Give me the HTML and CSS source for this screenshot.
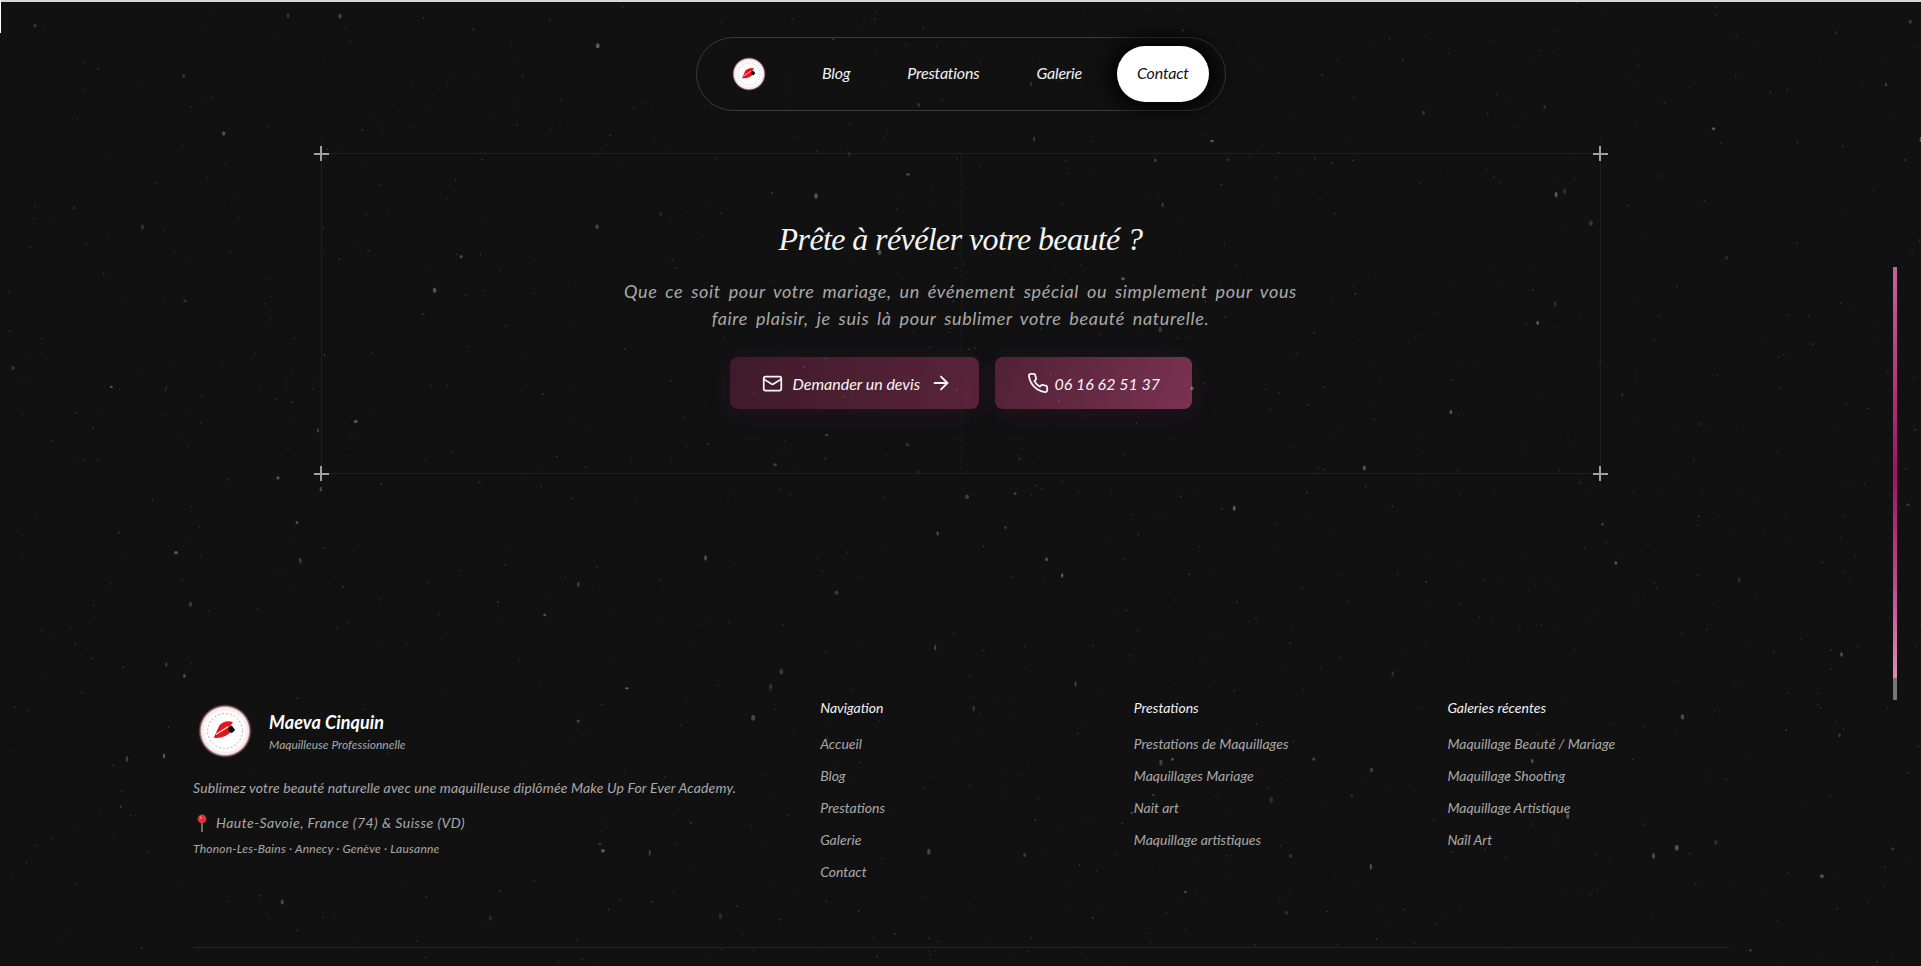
FILE: index.html
```html
<!DOCTYPE html>
<html lang="fr">
  <head>
    <meta charset="utf-8">
    <title>Maeva Cinquin - Maquilleuse Professionnelle</title>
    <link rel="stylesheet" href="styles.css">
  </head>
  <body>
    <svg class="defs" width="0" height="0" aria-hidden="true">
      <defs>
        <radialGradient id="logoGlow">
          <stop offset="0.72" stop-color="#fff"/>
          <stop offset="0.88" stop-color="#f6dfe4"/>
          <stop offset="1" stop-color="#7a3040" stop-opacity="0"/>
        </radialGradient>
        <symbol id="logo" viewBox="0 0 48 48">
          <circle cx="24" cy="24" r="24" fill="url(#logoGlow)"/>
          <circle cx="24" cy="24" r="15.5" fill="none" stroke="#999" stroke-width="0.8" stroke-dasharray="1.5 2"/>
          <path d="M14 30 L19 19 Q24 14 31 16 L28 21 L30 24 Q24 31 14 30 Z" fill="#e3141f"/>
          <path d="M16 27 L27 20" stroke="#fff" stroke-width="1"/>
          <path d="M27 21 L30 19 L33 23 L30 26 L27 24 Z" fill="#111"/>
        </symbol>
      </defs>
    </svg>

    <svg class="dust" id="dust" width="1921" height="966" aria-hidden="true"></svg>

    <div class="top-edge"></div>
    <div class="side-edge"></div>
    <div class="scroll-progress"><div class="scroll-thumb"></div></div>

    <nav class="navbar">
      <a class="nav-logo" href="#"><svg width="34" height="34"><use href="#logo"/></svg></a>
      <a class="nav-link" href="#">Blog</a>
      <a class="nav-link" href="#">Prestations</a>
      <a class="nav-link" href="#">Galerie</a>
      <a class="nav-link nav-active" href="#">Contact</a>
    </nav>

    <section class="cta">
      <span class="plus plus-tl"></span>
      <span class="plus plus-tr"></span>
      <span class="plus plus-bl"></span>
      <span class="plus plus-br"></span>
      <div class="cta-center"></div>

      <h2 class="cta-title">Prête à révéler votre beauté ?</h2>
      <p class="cta-text">Que ce soit pour votre mariage, un événement spécial ou simplement pour vous faire plaisir, je suis là pour sublimer votre beauté naturelle.</p>
      <div class="cta-buttons">
        <a class="btn btn-devis" href="#">
          <svg width="21" height="21" viewBox="0 0 24 24" fill="none" stroke="currentColor" stroke-width="2" stroke-linecap="round" stroke-linejoin="round"><rect x="2" y="4" width="20" height="16" rx="2"/><path d="m22 7-8.97 5.7a1.94 1.94 0 0 1-2.06 0L2 7"/></svg>
          <span>Demander un devis</span>
          <svg width="22" height="22" viewBox="0 0 24 24" fill="none" stroke="currentColor" stroke-width="2" stroke-linecap="round" stroke-linejoin="round"><path d="M5 12h14"/><path d="m12 5 7 7-7 7"/></svg>
        </a>
        <a class="btn btn-phone" href="#">
          <svg width="22" height="22" viewBox="0 0 24 24" fill="none" stroke="currentColor" stroke-width="2" stroke-linecap="round" stroke-linejoin="round"><path d="M22 16.92v3a2 2 0 0 1-2.18 2 19.79 19.79 0 0 1-8.63-3.07 19.5 19.5 0 0 1-6-6 19.79 19.79 0 0 1-3.07-8.67A2 2 0 0 1 4.11 2h3a2 2 0 0 1 2 1.72 12.84 12.84 0 0 0 .7 2.81 2 2 0 0 1-.45 2.11L8.09 9.91a16 16 0 0 0 6 6l1.27-1.27a2 2 0 0 1 2.11-.45 12.84 12.84 0 0 0 2.81.7A2 2 0 0 1 22 16.92z"/></svg>
          <span>06 16 62 51 37</span>
        </a>
      </div>
    </section>

    <footer class="footer">
      <div class="footer-grid">
        <div class="footer-brand">
          <div class="brand-row">
            <svg class="brand-logo" width="54" height="54"><use href="#logo"/></svg>
            <div>
              <div class="brand-name">Maeva Cinquin</div>
              <div class="brand-sub">Maquilleuse Professionnelle</div>
            </div>
          </div>
          <p class="brand-text">Sublimez votre beauté naturelle avec une maquilleuse diplômée Make Up For Ever Academy.</p>
          <p class="brand-place">
            <svg width="15" height="18" viewBox="0 0 15 18"><path d="M7 8v10" stroke="#999" stroke-width="1.4"/><circle cx="7" cy="5" r="4.4" fill="#e0323c"/><circle cx="5.6" cy="3.6" r="1.1" fill="#f59a9f"/></svg>
            <span>Haute-Savoie, France (74) &amp; Suisse (VD)</span>
          </p>
          <p class="brand-cities">Thonon-Les-Bains · Annecy · Genève · Lausanne</p>
        </div>

        <div>
          <h3 class="footer-title">Navigation</h3>
          <ul class="footer-list">
            <li><a href="#">Accueil</a></li>
            <li><a href="#">Blog</a></li>
            <li><a href="#">Prestations</a></li>
            <li><a href="#">Galerie</a></li>
            <li><a href="#">Contact</a></li>
          </ul>
        </div>

        <div>
          <h3 class="footer-title">Prestations</h3>
          <ul class="footer-list">
            <li><a href="#">Prestations de Maquillages</a></li>
            <li><a href="#">Maquillages Mariage</a></li>
            <li><a href="#">Nait art</a></li>
            <li><a href="#">Maquillage artistiques</a></li>
          </ul>
        </div>

        <div>
          <h3 class="footer-title">Galeries récentes</h3>
          <ul class="footer-list">
            <li><a href="#">Maquillage Beauté / Mariage</a></li>
            <li><a href="#">Maquillage Shooting</a></li>
            <li><a href="#">Maquillage Artistique</a></li>
            <li><a href="#">Nail Art</a></li>
          </ul>
        </div>
      </div>
      <div class="footer-line"></div>
    </footer>

    <script>
      // film-grain dust over the whole page, seeded so every load looks the same
      var seed = 74;
      function rnd() {
        seed = (seed * 16807) % 2147483647;
        return seed / 2147483647;
      }
      var dust = "";
      for (var i = 0; i < 1300; i++) {
        var big = rnd() < 0.1;
        var rx = big ? 0.9 + rnd() * 1.1 : 0.5 + rnd() * 0.5;
        var ry = big ? 1 + rnd() * 2 : 0.5 + rnd() * 0.6;
        var alpha = big ? 0.1 + rnd() * 0.22 : 0.05 + rnd() * 0.14;
        dust += '<ellipse cx="' + (rnd() * 1921).toFixed(1) + '" cy="' + (rnd() * 966).toFixed(1) +
          '" rx="' + rx.toFixed(1) + '" ry="' + ry.toFixed(1) + '" fill="#fff" opacity="' + alpha.toFixed(2) + '"/>';
      }
      document.getElementById("dust").innerHTML = dust;
    </script>
  </body>
</html>
```

FILE: styles.css
```css
* {
  box-sizing: border-box;
}
html,
body {
  height: 966px;
  overflow: hidden;
}
body {
  margin: 0;
  padding-top: 37px;
  background: #111112;
  color: #fff;
  font-family: Lato, "Noto Sans", sans-serif;
  font-style: italic;
}
a {
  color: inherit;
  text-decoration: none;
}
.defs {
  position: absolute;
}
.dust {
  position: absolute;
  top: 0;
  left: 0;
  pointer-events: none;
  z-index: 5;
  filter: blur(0.4px);
}
.top-edge {
  position: absolute;
  top: 0;
  left: 0;
  right: 0;
  height: 2px;
  background: #d8d8d8;
}
.side-edge {
  position: absolute;
  top: 0;
  left: 0;
  width: 1px;
  height: 33px;
  background: #fff;
}
.scroll-progress {
  position: absolute;
  top: 267px;
  left: 1893px;
  width: 4px;
  height: 433px;
  background: #777;
  border-radius: 1px;
}
.scroll-thumb {
  height: 411px;
  background: linear-gradient(to bottom, #c9619f 0%, #a01363 50%, #b73e84 72%, #db8bbb 100%);
}

/* nav */
.navbar {
  display: flex;
  align-items: center;
  gap: 17px;
  width: 530px;
  height: 74px;
  margin: 0 auto;
  padding: 8px 17px 8px 35px;
  border: 1px solid #3a3a3a;
  border-radius: 37px;
  background: #111112;
  position: relative;
  left: 0.5px;
}
.nav-logo {
  display: flex;
  width: 34px;
  height: 34px;
  margin-right: 19px;
  filter: blur(0.5px);
}
.nav-link {
  display: block;
  height: 56px;
  padding: 0 20px;
  line-height: 54px;
  font-size: 16px;
  letter-spacing: -0.2px;
  color: #f2f2f2;
}
.nav-active {
  margin-left: -2px;
  background: #fff;
  color: #111;
  border-radius: 28px;
  box-shadow: 0 0 22px 6px #000;
}

/* call to action */
.cta {
  position: relative;
  width: 1280px;
  height: 321px;
  margin: 42px auto 0;
  padding-top: 61px;
  text-align: center;
  border: 1px solid #1f1f20;
}
.cta::before,
.cta::after {
  content: "";
  position: absolute;
  top: -24px;
  bottom: -24px;
  width: 1px;
  background: linear-gradient(to bottom, transparent, #1f1f20 24px, #1f1f20 calc(100% - 24px), transparent);
}
.cta::before {
  left: -1px;
}
.cta::after {
  right: -1px;
}
.cta-center {
  position: absolute;
  top: 0;
  bottom: 0;
  left: 639px;
  border-left: 1px dashed #1c1c1d;
}
.plus {
  position: absolute;
  z-index: 1;
  width: 15px;
  height: 15px;
  background:
    linear-gradient(#a0a0a0, #a0a0a0) center / 15px 2px no-repeat,
    linear-gradient(#a0a0a0, #a0a0a0) center / 2px 15px no-repeat;
}
.plus-tl { top: -8px; left: -8px; }
.plus-tr { top: -8px; right: -8px; }
.plus-bl { bottom: -8px; left: -8px; }
.plus-br { bottom: -8px; right: -8px; }
.cta-title {
  position: relative;
  margin: 0;
  font-family: "Liberation Serif", serif;
  font-size: 32px;
  line-height: 48px;
  font-weight: normal;
  letter-spacing: -0.6px;
  color: #f4f4f4;
}
.cta-text {
  position: relative;
  width: 690px;
  margin: 15px auto 25px;
  font-size: 18px;
  line-height: 27px;
  letter-spacing: 0.65px;
  word-spacing: 3px;
  color: #a9a9a9;
}
.cta-buttons {
  position: relative;
  display: flex;
  justify-content: center;
  gap: 16px;
}
.btn {
  display: flex;
  align-items: center;
  gap: 10px;
  height: 52px;
  padding: 0 32px;
  border-radius: 8px;
  font-size: 16px;
  white-space: nowrap;
  color: #f6f6f6;
  box-shadow: 0 4px 22px rgba(120, 40, 80, 0.18);
}
.btn svg {
  flex-shrink: 0;
}
.btn-devis {
  width: 249px;
  padding-right: 0;
  background: linear-gradient(100deg, #3e1b2a, #5a2339);
}
.btn-phone {
  width: 197px;
  gap: 6px;
  background: linear-gradient(110deg, #512135, #7a3252);
}

/* footer */
.footer {
  width: 1536px;
  margin: 224px auto 0;
  position: relative;
  left: 0.5px;
}
.footer-grid {
  display: grid;
  grid-template-columns: repeat(5, 1fr);
  gap: 32px;
  height: 249px;
}
.footer-brand {
  grid-column: span 2;
}
.brand-row {
  display: flex;
  align-items: center;
  gap: 17px;
  height: 54px;
  margin-top: 6px;
  padding-left: 5px;
}
.brand-logo {
  filter: blur(0.6px);
}
.brand-name {
  font-size: 18px;
  line-height: 26px;
  font-weight: bold;
  letter-spacing: 0.1px;
}
.brand-sub {
  margin-top: 2px;
  font-size: 12px;
  line-height: 16px;
  color: #a9a9a9;
}
.brand-text {
  margin: 20px 0 0;
  font-size: 14px;
  line-height: 20px;
  letter-spacing: 0.15px;
  color: #a9a9a9;
}
.brand-place {
  display: flex;
  align-items: center;
  gap: 6px;
  margin: 14px 0 0;
  padding-left: 2px;
  font-size: 14px;
  line-height: 22px;
  letter-spacing: 0.47px;
  color: #a9a9a9;
}
.brand-cities {
  margin: 7px 0 0;
  font-size: 12px;
  line-height: 16px;
  letter-spacing: 0.22px;
  color: #a9a9a9;
}
.footer-title {
  margin: 0;
  font-size: 14px;
  line-height: 20px;
  font-weight: normal;
  color: #f2f2f2;
}
.footer-list {
  list-style: none;
  margin: 16px 0 0;
  padding: 0;
}
.footer-list li {
  height: 32px;
  font-size: 14px;
  line-height: 20px;
  color: #a9a9a9;
}
.footer-line {
  height: 1px;
  background: #232324;
}
```
